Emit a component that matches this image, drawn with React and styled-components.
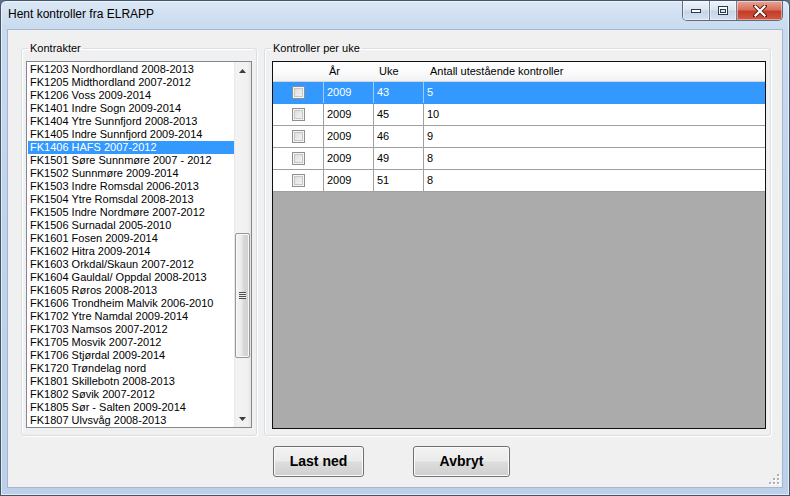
import React from "react";
import styled, { createGlobalStyle } from "styled-components";

const Global = createGlobalStyle`
  html, body { margin: 0; padding: 0; background: #5d6f86; overflow: hidden; }
  body { font-family: "Liberation Sans", Arial, sans-serif; font-size: 11px; color: #000; }
  * { box-sizing: border-box; }
`;

const Win = styled.div`
  width: 790px;
  height: 496px;
  display: flex;
  flex-direction: column;
  border: 1px solid #44546a;
  border-radius: 6px 6px 0 0;
  background: linear-gradient(to bottom, #dbe7f5 0px, #c8daee 28px, #c0d4ea 200px, #bcd1e9 100%);
  box-shadow: inset 0 0 0 1px rgba(255,255,255,0.55);
`;

const TitleBar = styled.div`
  height: 29px;
  display: flex;
  align-items: flex-start;
  padding-left: 7px;
`;

const Title = styled.div`
  margin-top: 5px;
  font-family: "Liberation Sans", Arial, sans-serif;
  font-size: 12px;
  line-height: 16px;
  color: #000;
`;

const Caption = styled.div`
  margin-left: auto;
  margin-right: 6px;
  display: flex;
  height: 20px;
  border: 1px solid #5b6c83;
  border-top: none;
  border-radius: 0 0 5px 5px;
  overflow: hidden;
`;

const CapBtn = styled.div`
  width: ${p => p.$w}px;
  height: 100%;
  display: flex;
  align-items: center;
  justify-content: center;
  border-left: ${p => (p.$first ? "none" : "1px solid #6d7e94")};
  background: ${p =>
    p.$close
      ? "linear-gradient(to bottom, #eba595 0%, #d9705b 45%, #c53c27 55%, #d25a42 100%)"
      : "linear-gradient(to bottom, #eef3f9 0%, #dbe5f1 45%, #c6d5e8 55%, #d4e1f0 100%)"};
  box-shadow: inset 0 0 0 1px rgba(255,255,255,0.45);
`;

const Client = styled.div`
  position: relative;
  flex: 1;
  margin: 0 7px 8px 7px;
  background: #f0f0f0;
  box-shadow: 0 0 0 1px #a3b7d0;
  display: grid;
  grid-template-columns: 236px 507px;
  grid-template-rows: 394px auto;
  column-gap: 7px;
  padding: 12px 13px 0 13px;
`;

const Group = styled.fieldset`
  margin: 0;
  min-width: 0;
  height: 394px;
  padding: 0 4px 6px 4px;
  border: 1px solid #d5dfe5;
  border-radius: 3px;
  box-shadow: inset 1px 1px 0 #fff, 1px 1px 0 #fff;
  display: flex;
  flex-direction: column;
  overflow: hidden;
`;

const Legend = styled.legend`
  padding: 0 2px;
  margin-left: 2px;
  font-size: 11px;
  line-height: 13px;
  color: #000;
`;

const ListBox = styled.div`
  margin-top: 6px;
  height: 367px;
  border: 1px solid #828790;
  background: #fff;
  display: flex;
`;

const Items = styled.div`
  flex: 1;
  padding: 1px 0 0 1px;
  overflow: hidden;
`;

const Item = styled.div`
  height: 13px;
  line-height: 13px;
  padding-left: 2px;
  white-space: nowrap;
  background: ${p => (p.$sel ? "#3399ff" : "transparent")};
  color: ${p => (p.$sel ? "#fff" : "#000")};
`;

const ScrollBar = styled.div`
  width: 17px;
  display: flex;
  flex-direction: column;
  background: linear-gradient(to right, #e6e6e6 0, #f3f3f3 2px, #f0f0f0 14px, #e3e3e3 17px);
`;

const Arrow = styled.div`
  height: 17px;
  display: flex;
  align-items: center;
  justify-content: center;
`;

const Track = styled.div`
  flex: 1;
  padding: 154px 1px 0 1px;
`;

const Thumb = styled.div`
  height: 125px;
  border: 1px solid #979797;
  border-radius: 2px;
  background: linear-gradient(to right, #f4f4f4 0%, #eaeaea 45%, #d9d9d9 55%, #d0d0d0 100%);
  box-shadow: inset 0 0 0 1px #f8f8f8;
  display: flex;
  align-items: center;
  justify-content: center;
`;

const Grip = styled.div`
  width: 7px;
  height: 7px;
  background: repeating-linear-gradient(to bottom, #4f4f4f 0, #4f4f4f 1px, #eeeeee 1px, #eeeeee 2px);
`;

const Grid = styled.div`
  margin: 6px 0 0 3px;
  height: 368px;
  flex-shrink: 0;
  border: 1px solid #101010;
  background: #ababab;
  display: flex;
  flex-direction: column;
`;

const cols = "50px 50px 50px 1fr";

const Header = styled.div`
  height: 20px;
  display: grid;
  grid-template-columns: ${cols};
  background: linear-gradient(to bottom, #ffffff 0%, #fbfbfc 50%, #f1f2f4 100%);
  border-bottom: 1px solid #d5d5d5;
`;

const HeadCell = styled.div`
  padding-left: ${p => p.$pl}px;
  line-height: 19px;
  white-space: nowrap;
`;

const Row = styled.div`
  height: 22px;
  display: grid;
  grid-template-columns: ${cols};
  border-bottom: 1px solid ${p => (p.$sel ? "#3399ff" : "#a0a0a0")};
  background: ${p => (p.$sel ? "#3399ff" : "#fff")};
  color: ${p => (p.$sel ? "#fff" : "#000")};
`;

const Cell = styled.div`
  line-height: 21px;
  padding-left: 3px;
  border-left: 1px solid ${p => (p.$sel ? "#9fcbf7" : "#a0a0a0")};
  white-space: nowrap;
`;

const CheckCell = styled.div`
  display: flex;
  align-items: center;
  justify-content: center;
  padding-left: 1px;
`;

const Check = styled.div`
  width: 13px;
  height: 13px;
  border: 1px solid #8e8f8f;
  background: linear-gradient(135deg, #d8d8d8 0%, #ececec 60%, #f6f6f6 100%);
  box-shadow: inset 0 0 0 1px #f4f4f4, inset 0 0 0 2px #c6c6c6;
`;

const ButtonBar = styled.div`
  grid-column: 2;
  display: flex;
  align-items: flex-start;
  gap: 49px;
  padding: 10px 0 0 9px;
`;

const Button = styled.button`
  width: ${p => p.$w}px;
  height: 31px;
  border: 1px solid #707070;
  border-radius: 3px;
  background: linear-gradient(to bottom, #f3f3f3 0%, #ebebeb 48%, #dddddd 52%, #cfcfcf 100%);
  box-shadow: inset 0 0 0 1px #fbfbfb;
  font-family: "Liberation Sans", Arial, sans-serif;
  font-weight: bold;
  font-size: 14px;
  color: #000;
  padding: 0 0 1px 0;
  margin: 0;
`;

const SizeGrip = styled.svg`
  position: absolute;
  right: 2px;
  bottom: 2px;
`;

const contracts = [
  "FK1203 Nordhordland 2008-2013",
  "FK1205 Midthordland 2007-2012",
  "FK1206 Voss 2009-2014",
  "FK1401 Indre Sogn 2009-2014",
  "FK1404 Ytre Sunnfjord 2008-2013",
  "FK1405 Indre Sunnfjord 2009-2014",
  "FK1406 HAFS 2007-2012",
  "FK1501 Søre Sunnmøre 2007 - 2012",
  "FK1502 Sunnmøre 2009-2014",
  "FK1503 Indre Romsdal 2006-2013",
  "FK1504 Ytre Romsdal 2008-2013",
  "FK1505 Indre Nordmøre 2007-2012",
  "FK1506 Surnadal 2005-2010",
  "FK1601 Fosen 2009-2014",
  "FK1602 Hitra 2009-2014",
  "FK1603 Orkdal/Skaun 2007-2012",
  "FK1604 Gauldal/ Oppdal 2008-2013",
  "FK1605 Røros 2008-2013",
  "FK1606 Trondheim Malvik 2006-2010",
  "FK1702 Ytre Namdal 2009-2014",
  "FK1703 Namsos 2007-2012",
  "FK1705 Mosvik 2007-2012",
  "FK1706 Stjørdal 2009-2014",
  "FK1720 Trøndelag nord",
  "FK1801 Skillebotn 2008-2013",
  "FK1802 Søvik 2007-2012",
  "FK1805 Sør - Salten 2009-2014",
  "FK1807 Ulvsvåg 2008-2013",
];

const rows = [
  ["2009", "43", "5"],
  ["2009", "45", "10"],
  ["2009", "46", "9"],
  ["2009", "49", "8"],
  ["2009", "51", "8"],
];

export default function App() {
  return (
    <>
      <Global />
      <Win>
        <TitleBar>
          <Title>Hent kontroller fra ELRAPP</Title>
          <Caption>
            <CapBtn $w={26} $first>
              <svg width="12" height="6" viewBox="0 0 12 6">
                <rect x="1.5" y="1.5" width="9" height="3" fill="#fff" stroke="#2c3a4c" strokeWidth="1" />
              </svg>
            </CapBtn>
            <CapBtn $w={27}>
              <svg width="12" height="10" viewBox="0 0 12 10">
                <rect x="1.5" y="0.5" width="9" height="8" fill="#fff" stroke="#2c3a4c" strokeWidth="1" />
                <rect x="3.5" y="3.5" width="5" height="3" fill="#dbe5f1" stroke="#2c3a4c" strokeWidth="1" />
              </svg>
            </CapBtn>
            <CapBtn $w={46} $close>
              <svg width="14" height="12" viewBox="0 0 14 12">
                <path d="M2 1 L12 11 M12 1 L2 11" stroke="#5a1a10" strokeWidth="4" strokeLinecap="square" />
                <path d="M2.5 1.5 L11.5 10.5 M11.5 1.5 L2.5 10.5" stroke="#fff" strokeWidth="2.2" strokeLinecap="square" />
              </svg>
            </CapBtn>
          </Caption>
        </TitleBar>
        <Client>
          <Group>
            <Legend>Kontrakter</Legend>
            <ListBox>
              <Items>
                {contracts.map((c, i) => (
                  <Item key={c} $sel={i === 6}>{c}</Item>
                ))}
              </Items>
              <ScrollBar>
                <Arrow>
                  <svg width="7" height="4" viewBox="0 0 7 4"><path d="M0 4 L3.5 0 L7 4 Z" fill="#3c3c3c" /></svg>
                </Arrow>
                <Track>
                  <Thumb><Grip /></Thumb>
                </Track>
                <Arrow>
                  <svg width="7" height="4" viewBox="0 0 7 4"><path d="M0 0 L7 0 L3.5 4 Z" fill="#3c3c3c" /></svg>
                </Arrow>
              </ScrollBar>
            </ListBox>
          </Group>
          <Group>
            <Legend>Kontroller per uke</Legend>
            <Grid>
              <Header>
                <HeadCell $pl={0} />
                <HeadCell $pl={6}>År</HeadCell>
                <HeadCell $pl={6}>Uke</HeadCell>
                <HeadCell $pl={7}>Antall utestående kontroller</HeadCell>
              </Header>
              {rows.map((r, i) => (
                <Row key={i} $sel={i === 0}>
                  <CheckCell><Check /></CheckCell>
                  {r.map((v, j) => (
                    <Cell key={j} $sel={i === 0}>{v}</Cell>
                  ))}
                </Row>
              ))}
            </Grid>
          </Group>
          <ButtonBar>
            <Button $w={91}>Last ned</Button>
            <Button $w={97}>Avbryt</Button>
          </ButtonBar>
          <SizeGrip width="12" height="12" viewBox="0 0 12 12">
            {[[10, 2], [10, 6], [10, 10], [6, 6], [6, 10], [2, 10]].map(([x, y]) => (
              <g key={`${x}-${y}`}>
                <rect x={x} y={y} width="2" height="2" fill="#fff" />
                <rect x={x - 1} y={y - 1} width="2" height="2" fill="#a9b2bd" />
              </g>
            ))}
          </SizeGrip>
        </Client>
      </Win>
    </>
  );
}
